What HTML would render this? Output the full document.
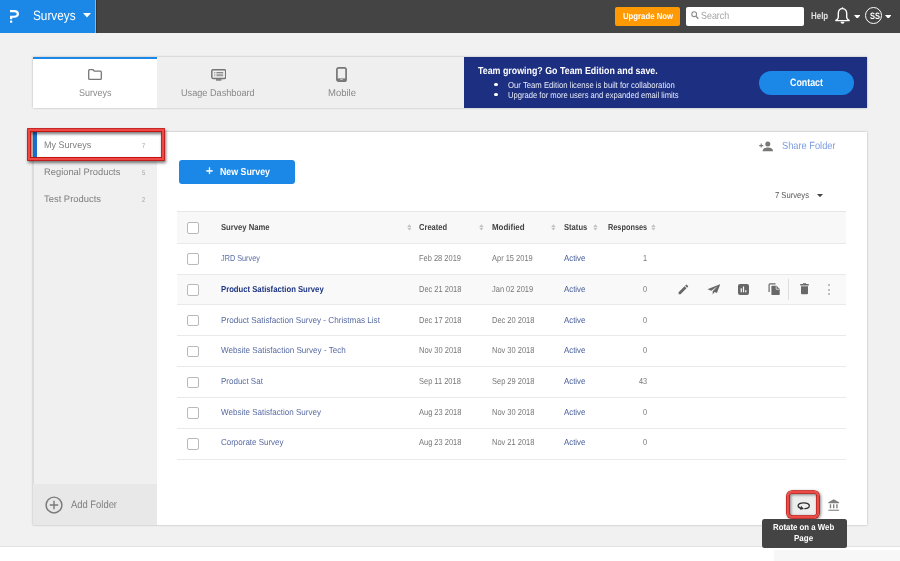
<!DOCTYPE html>
<html lang="en"><head><meta charset="utf-8"><title>Surveys</title>
<style>
html,body{margin:0;padding:0}
body{width:900px;height:561px;position:relative;overflow:hidden;background:#f1f1f1;font-family:"Liberation Sans",sans-serif}
.b{position:absolute;display:block}
.t{position:absolute;display:block;white-space:nowrap;line-height:1;transform-origin:0 50%;text-rendering:geometricPrecision}
</style></head><body>
<div class="b" style="left:0px;top:0px;width:900px;height:32.5px;background:#444"></div>
<div class="b" style="left:0px;top:0px;width:95.2px;height:32.6px;background:#1b87e6"></div>
<div class="b" style="left:95.2px;top:0px;width:1px;height:32.6px;background:#7db9f0"></div>
<div class="b" style="left:96.2px;top:0px;width:1px;height:32.5px;background:#333"></div>
<svg class="b" style="left:9px;top:10px" width="11" height="13" viewBox="0 0 11 13"><path d="M1 1.15H5.2C7.6 1.15 8.9 2.3 8.9 3.95C8.9 5.6 7.6 6.75 5.2 6.75H2.15V9.3" fill="none" stroke="#fff" stroke-width="2.2"/><rect x="1.05" y="10.6" width="2.2" height="2.1" fill="#fff"/></svg>
<span class="t" style="left:33.4px;top:9.0px;font-size:13.5px;color:#fff;transform:scaleX(0.874);">Surveys</span>
<svg class="b" style="left:82.7px;top:13.2px" width="8" height="5" viewBox="0 0 8 5"><path d="M0 0H8L4 4.6Z" fill="#fff"/></svg>
<div class="b" style="left:615px;top:7px;width:65px;height:19px;background:#ff9a05;border-radius:2px"></div>
<span class="t" style="left:622.5px;top:12.0px;font-size:8.8px;color:#fff;font-weight:bold;transform:scaleX(0.882);">Upgrade Now</span>
<div class="b" style="left:686px;top:7px;width:118px;height:19px;background:#fff;border-radius:2px"></div>
<svg class="b" style="left:690.8px;top:11.3px" width="8" height="8.5" viewBox="0 0 8 8.5"><circle cx="3.2" cy="3.2" r="2.4" fill="none" stroke="#8c8c8c" stroke-width="1.1"/><path d="M5 5.2L7.4 7.8" stroke="#8c8c8c" stroke-width="1.3"/></svg>
<span class="t" style="left:701.3px;top:12.0px;font-size:10.4px;color:#a4a4a4;transform:scaleX(0.856);">Search</span>
<span class="t" style="left:810.8px;top:12.0px;font-size:9.8px;color:#e0e0e0;font-weight:bold;transform:scaleX(0.810);">Help</span>
<svg class="b" style="left:834px;top:6.5px" width="17" height="18" viewBox="0 0 17 18"><path d="M8.5 1.6C5.6 1.6 4.3 3.9 4.3 6.6V10.2C4.3 11.6 3.2 12.6 1.8 13.6H15.2C13.8 12.6 12.7 11.6 12.7 10.2V6.6C12.7 3.9 11.4 1.6 8.5 1.6Z" fill="none" stroke="#fff" stroke-width="1.4" stroke-linejoin="round"/><path d="M6.5 14.8A2 2 0 0 0 10.5 14.8Z" fill="#fff"/><circle cx="8.5" cy="1.2" r="0.9" fill="#fff"/></svg>
<svg class="b" style="left:853.7px;top:14.6px" width="6.5" height="3.9" viewBox="0 0 6.5 3.9"><path d="M0 0H6.5L3.25 3.9Z" fill="#fff"/></svg>
<div class="b" style="left:865.4px;top:6.9px;width:14.9px;height:14.9px;border:1.4px solid #fff;border-radius:50%"></div>
<span class="t" style="left:869.6px;top:12.0px;font-size:9.3px;color:#fff;font-weight:bold;transform:scaleX(0.806);">SS</span>
<svg class="b" style="left:884.5px;top:14.6px" width="6.5" height="3.9" viewBox="0 0 6.5 3.9"><path d="M0 0H6.5L3.25 3.9Z" fill="#fff"/></svg>
<div class="b" style="left:33px;top:57px;width:834px;height:51px;background:#efefef;box-shadow:0 0 2px rgba(0,0,0,.28)"></div>
<div class="b" style="left:33px;top:57px;width:124px;height:51px;background:#fff;border-top:2px solid #1b87e6;box-sizing:border-box"></div>
<svg class="b" style="left:88px;top:69px" width="14" height="11" viewBox="0 0 14 11"><path d="M0.7 1.6Q0.7 0.7 1.6 0.7H5L6.3 2.2H12.4Q13.3 2.2 13.3 3.1V9.4Q13.3 10.3 12.4 10.3H1.6Q0.7 10.3 0.7 9.4Z" fill="none" stroke="#777" stroke-width="1.3"/></svg>
<span class="t" style="left:79.0px;top:89.0px;font-size:9.8px;color:#888;transform:scaleX(0.915);">Surveys</span>
<svg class="b" style="left:210.5px;top:68.5px" width="15.5" height="12" viewBox="0 0 15.5 12"><rect x="0.8" y="0.8" width="13.9" height="8.6" rx="1.3" fill="none" stroke="#757575" stroke-width="1.5"/><path d="M3.3 3.5H4.3M5.4 3.5H12.2M3.3 5.1H4.3M5.4 5.1H12.2M3.3 6.7H4.3M5.4 6.7H12.2" stroke="#757575" stroke-width="0.85"/><path d="M5 10.9H10.5" stroke="#757575" stroke-width="1.5"/></svg>
<span class="t" style="left:181.3px;top:89.0px;font-size:9.8px;color:#888;transform:scaleX(0.933);">Usage Dashboard</span>
<svg class="b" style="left:336.3px;top:67px" width="11" height="15" viewBox="0 0 11 15"><rect x="0.9" y="0.9" width="9.2" height="13.2" rx="1.7" fill="none" stroke="#777" stroke-width="1.7"/><rect x="1" y="11.4" width="9" height="2.4" fill="#777"/><rect x="4.3" y="12.2" width="2.4" height="0.8" fill="#ddd"/></svg>
<span class="t" style="left:327.5px;top:89.0px;font-size:9.8px;color:#888;transform:scaleX(0.970);">Mobile</span>
<div class="b" style="left:464px;top:57px;width:403px;height:51px;background:#1c2f80"></div>
<span class="t" style="left:477.5px;top:67.0px;font-size:10.2px;color:#fff;font-weight:bold;transform:scaleX(0.869);">Team growing? Go Team Edition and save.</span>
<div class="b" style="left:494.4px;top:82.7px;width:3.8px;height:3.8px;background:#fff;border-radius:50%"></div>
<div class="b" style="left:494.4px;top:92.7px;width:3.8px;height:3.8px;background:#fff;border-radius:50%"></div>
<span class="t" style="left:508.0px;top:81.0px;font-size:8.7px;color:#e8ecf8;transform:scaleX(0.889);">Our Team Edition license is built for collaboration</span>
<span class="t" style="left:508.0px;top:91.0px;font-size:8.7px;color:#e8ecf8;transform:scaleX(0.877);">Upgrade for more users and expanded email limits</span>
<div class="b" style="left:759px;top:71px;width:94.5px;height:23.5px;background:#1b87e6;border-radius:12px"></div>
<span class="t" style="left:790.0px;top:78.0px;font-size:10.6px;color:#fff;font-weight:bold;transform:scaleX(0.836);">Contact</span>
<div class="b" style="left:33px;top:131.6px;width:834px;height:393.4px;background:#fff;box-shadow:0 0 2px rgba(0,0,0,.3)"></div>
<div class="b" style="left:33px;top:131.6px;width:124px;height:393.4px;background:#f0f0f0"></div>
<div class="b" style="left:32.3px;top:131.6px;width:1.5px;height:393.4px;background:#dcdcdc"></div>
<div class="b" style="left:33px;top:484.4px;width:124px;height:40.6px;background:#e8e8e8"></div>
<div class="b" style="left:33px;top:131.6px;width:128px;height:26.4px;background:#fff"></div>
<div class="b" style="left:33px;top:131.6px;width:3.5px;height:26.4px;background:#1b6fd0"></div>
<span class="t" style="left:44.0px;top:141.0px;font-size:9.5px;color:#7e7e7e;transform:scaleX(0.951);">My Surveys</span>
<span class="t" style="left:141.9px;top:143.0px;font-size:7px;color:#a2a2a2;transform:scaleX(0.822);">7</span>
<span class="t" style="left:44.0px;top:168.0px;font-size:9.5px;color:#7e7e7e;transform:scaleX(0.984);">Regional Products</span>
<span class="t" style="left:141.9px;top:170.0px;font-size:7px;color:#a2a2a2;transform:scaleX(0.822);">5</span>
<span class="t" style="left:44.0px;top:195.0px;font-size:9.5px;color:#7e7e7e;transform:scaleX(0.990);">Test Products</span>
<span class="t" style="left:141.9px;top:197.0px;font-size:7px;color:#a2a2a2;transform:scaleX(0.822);">2</span>
<div class="b" style="left:28px;top:128.7px;width:131.6px;height:26.9px;border:2.2px solid #ee4a45;box-shadow:0 0 0 .9px #c41212, inset 0 0 0 .9px #c41212;filter:drop-shadow(1.5px 2px 1.6px rgba(0,0,0,.55))"></div>
<svg class="b" style="left:45px;top:495.5px" width="18" height="18" viewBox="0 0 18 18"><circle cx="9" cy="9" r="7.9" fill="none" stroke="#7a7a7a" stroke-width="1.45"/><path d="M9 4.8V13.2M4.8 9H13.2" stroke="#7a7a7a" stroke-width="1.4"/></svg>
<span class="t" style="left:71.0px;top:500.0px;font-size:10.8px;color:#7e7e7e;transform:scaleX(0.871);">Add Folder</span>
<div class="b" style="left:179.3px;top:159.7px;width:115.7px;height:24.2px;background:#1b87e6;border-radius:3px"></div>
<span class="t" style="left:206.2px;top:165.0px;font-size:12.6px;color:#fff;transform:scaleX(0.951);-webkit-text-stroke:.4px #fff;">+</span>
<span class="t" style="left:220.0px;top:168.0px;font-size:10.2px;color:#fff;font-weight:bold;transform:scaleX(0.865);">New Survey</span>
<svg class="b" style="left:759px;top:140.5px" width="14" height="11" viewBox="0 0 14 11"><circle cx="8.8" cy="3" r="2.5" fill="#777"/><path d="M3.6 10.3C3.6 7.6 6.4 6.6 8.8 6.6C11.2 6.6 14 7.6 14 10.3Z" fill="#777"/><path d="M2.2 2.6V6.6M0.2 4.6H4.2" stroke="#777" stroke-width="1.1"/></svg>
<span class="t" style="left:782.0px;top:142.0px;font-size:10.4px;color:#7b9ce2;transform:scaleX(0.892);">Share Folder</span>
<span class="t" style="left:775.0px;top:191.0px;font-size:8.7px;color:#555;transform:scaleX(0.879);">7 Surveys</span>
<svg class="b" style="left:816.5px;top:194.3px" width="6" height="3.2" viewBox="0 0 6 3.2"><path d="M0 0H6L3 3.2Z" fill="#444"/></svg>
<div class="b" style="left:177px;top:211.3px;width:669px;height:31.7px;background:#f8f8f8;border-top:1px solid #e6e6e6;box-sizing:border-box"></div>
<div class="b" style="left:177px;top:273.86px;width:669px;height:30.860000000000014px;background:#f9f9f9"></div>
<div class="b" style="left:177px;top:242.6px;width:669px;height:1px;background:#e9e9e9"></div>
<div class="b" style="left:177px;top:273.5px;width:669px;height:1px;background:#e9e9e9"></div>
<div class="b" style="left:177px;top:304.3px;width:669px;height:1px;background:#e9e9e9"></div>
<div class="b" style="left:177px;top:335.2px;width:669px;height:1px;background:#e9e9e9"></div>
<div class="b" style="left:177px;top:366.0px;width:669px;height:1px;background:#e9e9e9"></div>
<div class="b" style="left:177px;top:396.9px;width:669px;height:1px;background:#e9e9e9"></div>
<div class="b" style="left:177px;top:427.8px;width:669px;height:1px;background:#e9e9e9"></div>
<div class="b" style="left:177px;top:458.6px;width:669px;height:1px;background:#e9e9e9"></div>
<div class="b" style="left:187.2px;top:222.4px;width:9.6px;height:9.6px;border:1px solid #b9b9b9;border-radius:2px;background:#fff"></div>
<span class="t" style="left:221.4px;top:223.0px;font-size:8.7px;color:#444;font-weight:bold;transform:scaleX(0.882);">Survey Name</span>
<svg class="b" style="left:406.6px;top:224.4px" width="4.8" height="6.8" viewBox="0 0 4.8 6.8"><path d="M0.2 3.1L2.4 0.3L4.6 3.1Z M0.2 3.7L2.4 6.5L4.6 3.7Z" fill="#c2c2c2"/></svg>
<span class="t" style="left:419.4px;top:223.0px;font-size:8.7px;color:#444;font-weight:bold;transform:scaleX(0.870);">Created</span>
<svg class="b" style="left:479.0px;top:224.4px" width="4.8" height="6.8" viewBox="0 0 4.8 6.8"><path d="M0.2 3.1L2.4 0.3L4.6 3.1Z M0.2 3.7L2.4 6.5L4.6 3.7Z" fill="#c2c2c2"/></svg>
<span class="t" style="left:491.8px;top:223.0px;font-size:8.7px;color:#444;font-weight:bold;transform:scaleX(0.914);">Modified</span>
<svg class="b" style="left:551.4px;top:224.4px" width="4.8" height="6.8" viewBox="0 0 4.8 6.8"><path d="M0.2 3.1L2.4 0.3L4.6 3.1Z M0.2 3.7L2.4 6.5L4.6 3.7Z" fill="#c2c2c2"/></svg>
<span class="t" style="left:564.3px;top:223.0px;font-size:8.7px;color:#444;font-weight:bold;transform:scaleX(0.876);">Status</span>
<svg class="b" style="left:593.2px;top:224.4px" width="4.8" height="6.8" viewBox="0 0 4.8 6.8"><path d="M0.2 3.1L2.4 0.3L4.6 3.1Z M0.2 3.7L2.4 6.5L4.6 3.7Z" fill="#c2c2c2"/></svg>
<span class="t" style="left:607.5px;top:223.0px;font-size:8.7px;color:#444;font-weight:bold;transform:scaleX(0.844);">Responses</span>
<svg class="b" style="left:650.9px;top:224.4px" width="4.8" height="6.8" viewBox="0 0 4.8 6.8"><path d="M0.2 3.1L2.4 0.3L4.6 3.1Z M0.2 3.7L2.4 6.5L4.6 3.7Z" fill="#c2c2c2"/></svg>
<div class="b" style="left:187.2px;top:253.13000000000002px;width:9.6px;height:9.6px;border:1px solid #b9b9b9;border-radius:2px;background:#fff"></div>
<span class="t" style="left:221.4px;top:254.0px;font-size:8.7px;color:#586ba2;transform:scaleX(0.838);">JRD Survey</span>
<span class="t" style="left:419.4px;top:254.0px;font-size:8.7px;color:#777;transform:scaleX(0.860);">Feb 28 2019</span>
<span class="t" style="left:491.8px;top:254.0px;font-size:8.7px;color:#777;transform:scaleX(0.860);">Apr 15 2019</span>
<span class="t" style="left:564.3px;top:254.0px;font-size:8.7px;color:#465c98;transform:scaleX(0.903);">Active</span>
<span class="t" style="left:642.6px;top:254.0px;font-size:8.7px;color:#777;transform:scaleX(0.840);">1</span>
<div class="b" style="left:187.2px;top:283.99px;width:9.6px;height:9.6px;border:1px solid #b9b9b9;border-radius:2px;background:#fff"></div>
<span class="t" style="left:221.4px;top:285.0px;font-size:8.7px;color:#1c3583;font-weight:bold;transform:scaleX(0.886);">Product Satisfaction Survey</span>
<span class="t" style="left:419.4px;top:285.0px;font-size:8.7px;color:#777;transform:scaleX(0.860);">Dec 21 2018</span>
<span class="t" style="left:491.8px;top:285.0px;font-size:8.7px;color:#777;transform:scaleX(0.860);">Jan 02 2019</span>
<span class="t" style="left:564.3px;top:285.0px;font-size:8.7px;color:#465c98;transform:scaleX(0.903);">Active</span>
<span class="t" style="left:642.6px;top:285.0px;font-size:8.7px;color:#777;transform:scaleX(0.840);">0</span>
<div class="b" style="left:187.2px;top:314.84999999999997px;width:9.6px;height:9.6px;border:1px solid #b9b9b9;border-radius:2px;background:#fff"></div>
<span class="t" style="left:221.4px;top:316.0px;font-size:8.7px;color:#586ba2;transform:scaleX(0.938);">Product Satisfaction Survey - Christmas List</span>
<span class="t" style="left:419.4px;top:316.0px;font-size:8.7px;color:#777;transform:scaleX(0.860);">Dec 17 2018</span>
<span class="t" style="left:491.8px;top:316.0px;font-size:8.7px;color:#777;transform:scaleX(0.860);">Dec 20 2018</span>
<span class="t" style="left:564.3px;top:316.0px;font-size:8.7px;color:#465c98;transform:scaleX(0.903);">Active</span>
<span class="t" style="left:642.6px;top:316.0px;font-size:8.7px;color:#777;transform:scaleX(0.840);">0</span>
<div class="b" style="left:187.2px;top:345.71px;width:9.6px;height:9.6px;border:1px solid #b9b9b9;border-radius:2px;background:#fff"></div>
<span class="t" style="left:221.4px;top:346.0px;font-size:8.7px;color:#586ba2;transform:scaleX(0.932);">Website Satisfaction Survey - Tech</span>
<span class="t" style="left:419.4px;top:346.0px;font-size:8.7px;color:#777;transform:scaleX(0.860);">Nov 30 2018</span>
<span class="t" style="left:491.8px;top:346.0px;font-size:8.7px;color:#777;transform:scaleX(0.860);">Nov 30 2018</span>
<span class="t" style="left:564.3px;top:346.0px;font-size:8.7px;color:#465c98;transform:scaleX(0.903);">Active</span>
<span class="t" style="left:642.6px;top:346.0px;font-size:8.7px;color:#777;transform:scaleX(0.840);">0</span>
<div class="b" style="left:187.2px;top:376.57px;width:9.6px;height:9.6px;border:1px solid #b9b9b9;border-radius:2px;background:#fff"></div>
<span class="t" style="left:221.4px;top:377.0px;font-size:8.7px;color:#586ba2;transform:scaleX(0.922);">Product Sat</span>
<span class="t" style="left:419.4px;top:377.0px;font-size:8.7px;color:#777;transform:scaleX(0.860);">Sep 11 2018</span>
<span class="t" style="left:491.8px;top:377.0px;font-size:8.7px;color:#777;transform:scaleX(0.860);">Sep 29 2018</span>
<span class="t" style="left:564.3px;top:377.0px;font-size:8.7px;color:#465c98;transform:scaleX(0.903);">Active</span>
<span class="t" style="left:638.6px;top:377.0px;font-size:8.7px;color:#777;transform:scaleX(0.840);">43</span>
<div class="b" style="left:187.2px;top:407.43px;width:9.6px;height:9.6px;border:1px solid #b9b9b9;border-radius:2px;background:#fff"></div>
<span class="t" style="left:221.4px;top:408.0px;font-size:8.7px;color:#586ba2;transform:scaleX(0.926);">Website Satisfaction Survey</span>
<span class="t" style="left:419.4px;top:408.0px;font-size:8.7px;color:#777;transform:scaleX(0.860);">Aug 23 2018</span>
<span class="t" style="left:491.8px;top:408.0px;font-size:8.7px;color:#777;transform:scaleX(0.860);">Nov 30 2018</span>
<span class="t" style="left:564.3px;top:408.0px;font-size:8.7px;color:#465c98;transform:scaleX(0.903);">Active</span>
<span class="t" style="left:642.6px;top:408.0px;font-size:8.7px;color:#777;transform:scaleX(0.840);">0</span>
<div class="b" style="left:187.2px;top:438.28999999999996px;width:9.6px;height:9.6px;border:1px solid #b9b9b9;border-radius:2px;background:#fff"></div>
<span class="t" style="left:221.4px;top:438.0px;font-size:8.7px;color:#586ba2;transform:scaleX(0.918);">Corporate Survey</span>
<span class="t" style="left:419.4px;top:438.0px;font-size:8.7px;color:#777;transform:scaleX(0.860);">Aug 23 2018</span>
<span class="t" style="left:491.8px;top:438.0px;font-size:8.7px;color:#777;transform:scaleX(0.860);">Nov 21 2018</span>
<span class="t" style="left:564.3px;top:438.0px;font-size:8.7px;color:#465c98;transform:scaleX(0.903);">Active</span>
<span class="t" style="left:642.6px;top:438.0px;font-size:8.7px;color:#777;transform:scaleX(0.840);">0</span>
<svg class="b" style="left:676.6px;top:283.1px" width="12.8" height="12.8" viewBox="0 0 24 24"><path fill="#686868" d="M3 17.25V21h3.75L17.81 9.94l-3.75-3.75L3 17.25zM20.71 7.04a1 1 0 0 0 0-1.41l-2.34-2.34a1 1 0 0 0-1.41 0l-1.83 1.83 3.75 3.75 1.83-1.83z"/></svg>
<svg class="b" style="left:706.5px;top:283.7px" width="13.5" height="11" viewBox="0 0 27 22"><path fill="#686868" d="M26.5 0.5L0.8 10.6L8.6 13.4L21 4.6L11.4 14.6L11.4 21.2L15.2 16L19.8 17.8Z"/></svg>
<svg class="b" style="left:738px;top:283.8px" width="11" height="11" viewBox="0 0 22 22"><rect x="0" y="0" width="22" height="22" rx="4" fill="#686868"/><path d="M6.5 8.5V16.5M11 5V16.5M15.5 12.5V16.5" stroke="#fff" stroke-width="2.4"/></svg>
<svg class="b" style="left:767.5px;top:283.1px" width="12.5" height="12.5" viewBox="0 0 25 25"><path d="M2.2 18V3.4Q2.2 1.6 4 1.6H15" fill="none" stroke="#686868" stroke-width="2.4"/><path fill="#686868" d="M8.4 5.6H17L23.4 12V22.6Q23.4 24.2 21.8 24.2H8.4Q6.8 24.2 6.8 22.6V7.2Q6.8 5.6 8.4 5.6Z"/><path d="M16.4 6.6V12.6H22.4" fill="none" stroke="#f9f9f9" stroke-width="1.4"/></svg>
<div class="b" style="left:788px;top:278.79px;width:1px;height:21.5px;background:#ddd"></div>
<svg class="b" style="left:799.8px;top:283.4px" width="9" height="11.5" viewBox="0 0 18 23"><path fill="#686868" d="M6 0.5H12V2.2H17.5V5H0.5V2.2H6Z"/><path fill="#686868" d="M2 6.6H16V20.4Q16 22.6 13.8 22.6H4.2Q2 22.6 2 20.4Z"/></svg>
<div class="b" style="left:828.2px;top:284.39000000000004px;width:2.1px;height:2.1px;background:#aaa;border-radius:50%"></div>
<div class="b" style="left:828.2px;top:288.59000000000003px;width:2.1px;height:2.1px;background:#aaa;border-radius:50%"></div>
<div class="b" style="left:828.2px;top:292.79px;width:2.1px;height:2.1px;background:#aaa;border-radius:50%"></div>
<div class="b" style="left:0px;top:546px;width:900px;height:1px;background:#e2e2e2"></div>
<div class="b" style="left:0px;top:547px;width:900px;height:14px;background:#fff"></div>
<div class="b" style="left:774.2px;top:550.2px;width:125.8px;height:10.8px;background:#f7f7f7"></div>
<div class="b" style="left:789px;top:493px;width:28px;height:23px;background:#eee;border-radius:3px"></div>
<svg class="b" style="left:797.3px;top:502.2px" width="13.3" height="8.4" viewBox="0 0 27 17"><path d="M16 13.4C21.6 13.2 25 11 25 7.6C25 4.2 20.4 1.6 13.6 1.6C6.8 1.6 2.2 4.2 2.2 7.6C2.2 10 4.6 11.8 8.4 12.8" fill="none" stroke="#2f2f2f" stroke-width="2.6" stroke-linecap="round"/><path d="M8.2 7.8L14 14.2L6.2 15.8Z" fill="#2e2e2e"/></svg>
<svg class="b" style="left:828.2px;top:498.8px" width="11.4" height="12.2" viewBox="0 0 23 24.4"><path fill="#808080" d="M11.5 0.4L22.4 6.6V8.4H0.6V6.6Z"/><path d="M5 10.4V18.8M11.5 10.4V18.8M18 10.4V18.8" stroke="#808080" stroke-width="2.8"/><path d="M0.6 22.6H22.4" stroke="#808080" stroke-width="2.2"/></svg>
<div class="b" style="left:787.05px;top:490.85px;width:27.7px;height:22.7px;border:2.2px solid #ee4a45;border-radius:5px;box-shadow:0 0 0 .85px #c41212, inset 0 0 0 .85px #c41212;filter:drop-shadow(1.5px 1.5px 1.5px rgba(0,0,0,.5))"></div>
<div class="b" style="left:761.5px;top:518.8px;width:85.2px;height:29.5px;background:#444;border-radius:2.5px"></div>
<span class="t" style="left:773.3px;top:523.0px;font-size:8.8px;color:#fff;font-weight:bold;transform:scaleX(0.890);">Rotate on a Web</span>
<span class="t" style="left:794.4px;top:534.0px;font-size:8.8px;color:#fff;font-weight:bold;transform:scaleX(0.908);">Page</span>
</body></html>
